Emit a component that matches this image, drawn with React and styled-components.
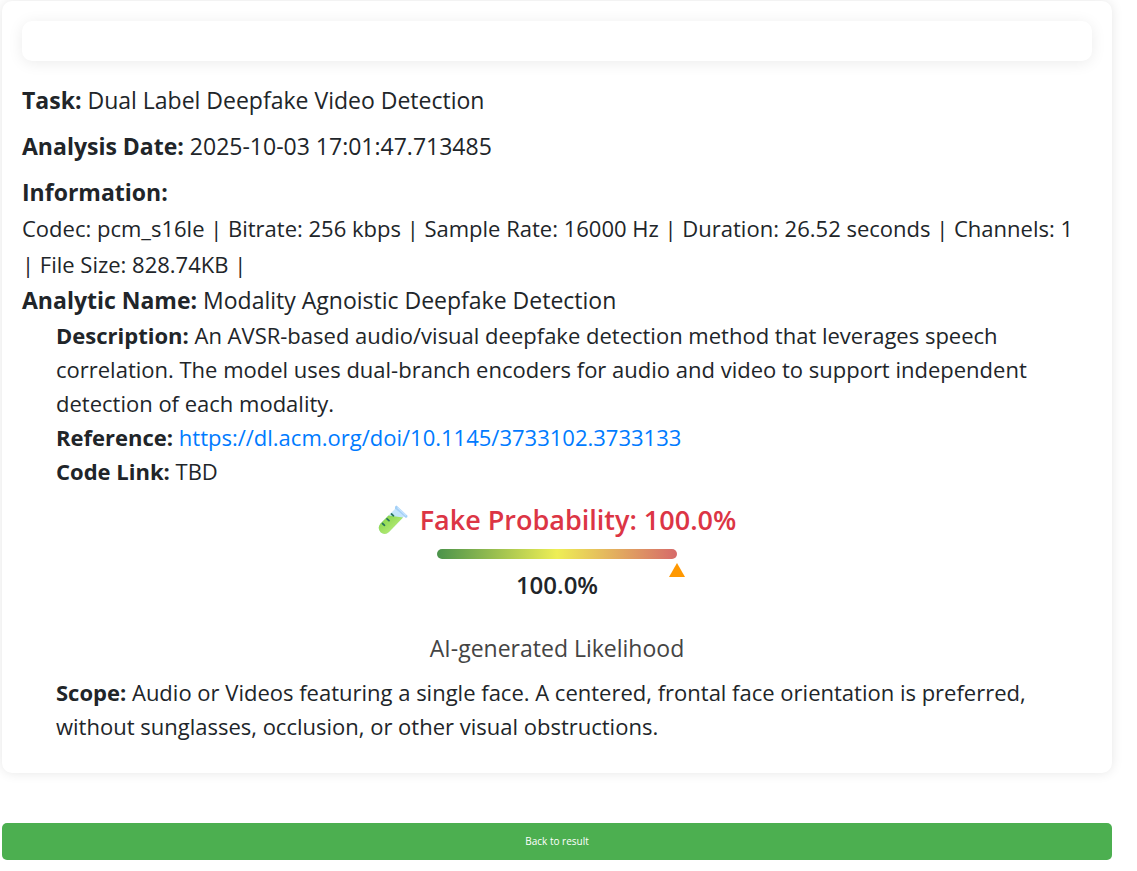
import styled, { createGlobalStyle } from "styled-components"

const GlobalStyle = createGlobalStyle`
  * {
    box-sizing: border-box;
  }
  body {
    margin: 0;
    background-color: #fff;
    color: #212529;
    font-family: "Open Sans", "Noto Sans", sans-serif;
  }
`

const Page = styled.main`
  padding: 1px 25px 11px 2px;
`

const Card = styled.section`
  padding: 20px 20px 30px;
  border-radius: 10px;
  background-color: #fff;
  box-shadow: 0 0 12px rgba(0, 0, 0, 0.1);
`

const MediaBox = styled.div`
  height: 40px;
  margin-bottom: 21px;
  border-radius: 10px;
  background-color: #fff;
  box-shadow: 0 2px 15px rgba(0, 0, 0, 0.08);
`

const Line = styled.p`
  margin: 0 0 ${props => props.$gap || 0}px;
  font-size: ${props => props.$small ? 22 : 23}px;
  line-height: 36px;
`

const NoWrap = styled.span`
  white-space: nowrap;
`

const Details = styled.div`
  padding: 0 34px;
  font-size: 22px;
  line-height: 34px;

  p {
    margin: 0;
  }
  a {
    color: #007bff;
    text-decoration: none;
  }
`

const Score = styled.div`
  display: flex;
  flex-direction: column;
  align-items: center;
  padding: 15px 0 10px;
`

const ScoreTitle = styled.h2`
  display: flex;
  align-items: center;
  gap: 12px;
  margin: 0 0 12px;
  color: #dc3545;
  font-size: 27px;
  font-weight: 600;
  line-height: 34px;
`

const Gauge = styled.div`
  position: relative;
  width: 240px;
  height: 10px;
  border-radius: 5px;
  background: linear-gradient(to right, #4b934b, #eeee55 50%, #d66a6a);
`

const Pointer = styled.span`
  position: absolute;
  top: 14px;
  border-left: 8px solid transparent;
  border-right: 8px solid transparent;
  border-bottom: 14px solid #ff9800;
  transform: translateX(-50%);
`

const ScoreValue = styled.div`
  margin: 8px 0 28px;
  font-size: 24px;
  font-weight: 600;
  line-height: 36px;
`

const ScoreLabel = styled.div`
  color: #444;
  font-size: 23px;
  line-height: 34px;
`

const BackButton = styled.button`
  display: block;
  width: 100%;
  margin-top: 50px;
  padding: 10px;
  border: none;
  border-radius: 5px;
  background-color: #4caf50;
  color: #fff;
  font-family: inherit;
  font-size: 10px;
  line-height: 17px;
  cursor: pointer;
  &:hover {
    background-color: #45a049;
  }
`

const TestTube = () => (
  <svg width="30" height="30" viewBox="0 0 30 30" aria-hidden="true">
    <defs>
      <linearGradient id="liquid" x1="0" y1="0" x2="1" y2="1">
        <stop offset="0" stopColor="#7cd040" />
        <stop offset="1" stopColor="#c9f48a" />
      </linearGradient>
    </defs>
    <path d="M17.5 3.5 L26 11.5 L11 27 Q7 30.5 2.8 27.5 Q-1.2 23.5 2.5 18.5 Z" fill="#c4e5fb" />
    <path d="M10.5 10.5 L25 12.5 L11 27 Q7 30.5 2.8 27.5 Q-1.2 23.5 2.5 18.5 Z" fill="url(#liquid)" />
    <path d="M18.5 0.5 L29.5 10.7 Q29.6 13 27.5 12.8 L17 3.5 Q16.6 1 18.5 0.5 Z" fill="#a3d0f7" />
    <path d="M19.5 2.5 L28 10.5" stroke="#c7e4ff" strokeWidth="1.2" fill="none" />
    <path d="M13.5 9 L15.5 10.8 M9 13.8 L11 15.6 M4.5 18.5 L6.5 20.3" stroke="#26735c" strokeWidth="1.7" strokeLinecap="round" />
  </svg>
)

const probability = 100

const App = () => {
  return (
    <>
      <GlobalStyle />
      <Page>
        <Card>
          <MediaBox />
          <Line $gap={10}><strong>Task:</strong> Dual Label Deepfake Video Detection</Line>
          <Line $gap={10}><strong>Analysis Date:</strong> 2025-10-03 17:01:47.713485</Line>
          <Line><strong>Information:</strong></Line>
          <Line $small>
            Codec: pcm_s16le | Bitrate: 256 kbps | Sample Rate: 16000 Hz | Duration: 26.52 seconds | Channels: 1 <NoWrap>| File Size: 828.74KB |</NoWrap>
          </Line>
          <Line><strong>Analytic Name:</strong> Modality Agnoistic Deepfake Detection</Line>
          <Details>
            <p>
              <strong>Description:</strong> An AVSR-based audio/visual deepfake detection method that leverages speech correlation. The model uses dual-branch encoders for audio and video to support independent detection of each modality.
            </p>
            <p>
              <strong>Reference:</strong> <a href="https://dl.acm.org/doi/10.1145/3733102.3733133">https://dl.acm.org/doi/10.1145/3733102.3733133</a>
            </p>
            <p><strong>Code Link:</strong> TBD</p>
          </Details>
          <Score>
            <ScoreTitle>
              <TestTube />
              Fake Probability: {probability.toFixed(1)}%
            </ScoreTitle>
            <Gauge>
              <Pointer style={{ left: `${probability}%` }} />
            </Gauge>
            <ScoreValue>{probability.toFixed(1)}%</ScoreValue>
            <ScoreLabel>AI-generated Likelihood</ScoreLabel>
          </Score>
          <Details>
            <p>
              <strong>Scope:</strong> Audio or Videos featuring a single face. A centered, frontal face orientation is preferred, without sunglasses, occlusion, or other visual obstructions.
            </p>
          </Details>
        </Card>
        <BackButton type="button">Back to result</BackButton>
      </Page>
    </>
  )
}

export default App
